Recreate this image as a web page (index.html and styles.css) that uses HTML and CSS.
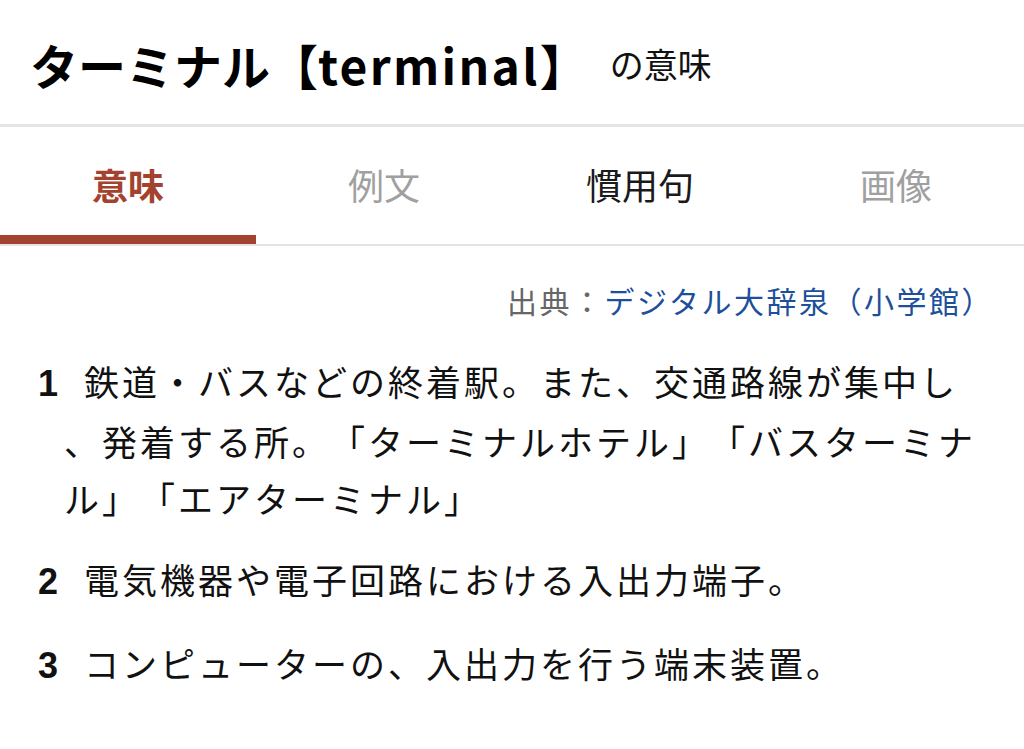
FILE: index.html
```html
<!DOCTYPE html>
<html lang="ja">
<head>
    <meta charset="UTF-8">
    <meta name="viewport" content="width=device-width, initial-scale=1.0">
    <title>ターミナル【terminal】の意味</title>
    <link rel="stylesheet" href="styles.css">
</head>
<body>
    <header class="word_head">
        <h1 class="word_title">ターミナル【<span class="word_en">terminal</span>】</h1>
        <span class="word_suffix">の意味</span>
    </header>
    <nav class="tabs">
        <a class="tab active" href="#">意味</a>
        <a class="tab disabled" href="#">例文</a>
        <a class="tab" href="#">慣用句</a>
        <a class="tab disabled" href="#">画像</a>
    </nav>
    <section class="content">
        <p class="source">出典：<a href="#">デジタル大辞泉（小学館）</a></p>
        <ol class="defs">
            <li class="def"><span class="def_num">1</span>鉄道・バスなどの終着駅。また、交通路線が集中し、発着する所。「ターミナルホテル」「バスターミナル」「エアターミナル」</li>
            <li class="def"><span class="def_num">2</span>電気機器や電子回路における入出力端子。</li>
            <li class="def"><span class="def_num">3</span>コンピューターの、入出力を行う端末装置。</li>
        </ol>
    </section>
</body>
</html>
```

FILE: styles.css
```css
* {
    margin: 0;
    padding: 0;
    box-sizing: border-box;
    font-family: "Noto Sans CJK JP", "Noto Sans", sans-serif;
    text-spacing-trim: space-all;
}
body {
    background: #fff;
    color: #111;
}
a {
    text-decoration: none;
}
.word_head {
    display: flex;
    align-items: center;
    height: 127px;
    padding: 3px 30px 0;
    border-bottom: 3px solid #e4e4e6;
}
.word_title {
    font-size: 48px;
    font-weight: 700;
    color: #000;
}
.word_en {
    letter-spacing: 2.3px;
}
.word_suffix {
    font-size: 34px;
    margin-left: 22px;
}
.tabs {
    display: grid;
    grid-template-columns: repeat(4, 1fr);
    border-bottom: 2px solid #e4e4e6;
}
.tab {
    display: flex;
    align-items: center;
    justify-content: center;
    height: 117px;
    padding-top: 5px;
    font-size: 36px;
    color: #1a1a1a;
    border-bottom: 9px solid transparent;
}
.tab.active {
    color: #a3432f;
    font-weight: 700;
    border-bottom-color: #a3432f;
}
.tab.disabled {
    color: #a0a0a0;
}
.content {
    padding: 32px 38px 0 38px;
}
.source {
    text-align: right;
    font-size: 30px;
    letter-spacing: 2.5px;
    color: #666;
    margin-right: -8px;
    margin-bottom: 30px;
}
.source a {
    color: #1d4f9b;
}
.defs {
    list-style: none;
}
.def {
    font-size: 35px;
    line-height: 57px;
    letter-spacing: 3px;
    padding-left: 26px;
    text-indent: -26px;
    line-break: anywhere;
    margin-bottom: 24px;
}
.def_num {
    display: inline-block;
    width: 46px;
    text-indent: 0;
    font-family: "Liberation Sans", sans-serif;
    font-weight: 700;
    font-size: 36px;
    color: #111;
}
```
